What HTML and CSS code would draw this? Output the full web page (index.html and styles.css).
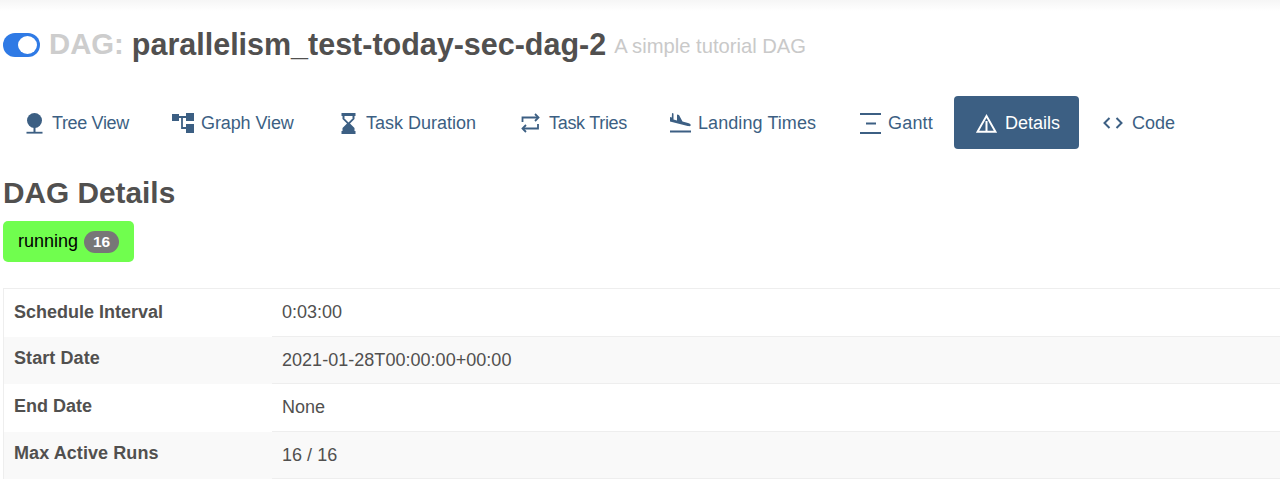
FILE: index.html
```html
<!DOCTYPE html>
<html lang="en">
<head>
<meta charset="utf-8">
<title>DAG Details</title>
<link rel="stylesheet" href="styles.css">
</head>
<body>
<div class="topshade"></div>
<main class="page">
  <h1 class="title">
    <span class="switch"><span class="knob"></span></span>
    <span class="dag-label">DAG:</span>
    <span class="dag-name">parallelism_test-today-sec-dag-2</span>
    <small class="dag-desc">A simple tutorial DAG</small>
  </h1>
  <nav class="tabs">
    <a class="tab tab-tree"><svg class="ico" width="17" height="21" viewBox="0 0 17 21"><circle cx="8.500" cy="7.500" r="7.500"/><rect x="7.500" y="12" width="2" height="7"/><rect x="0.500" y="18.800" width="16" height="1.800"/></svg>Tree View</a>
    <a class="tab tab-graph"><svg class="ico" width="22" height="20" viewBox="0 0 22 20"><rect x="0" y="1" width="7" height="7"/><rect x="14" y="0" width="8" height="8"/><rect x="14" y="11" width="8" height="9"/><path d="M7 4h7M10 4v11h4" fill="none" stroke="currentColor" stroke-width="1.800"/></svg>Graph View</a>
    <a class="tab tab-dur"><svg class="ico" width="15" height="21" viewBox="0 0 15 21"><path d="M0.500 0h14v3h-1v3L9 10.500l4.500 4.500v3h1v3H.5v-3h1v-3L6 10.500 1.500 6V3h-1z"/><path d="M3.500 3h8v2.500l-4 4-4-4z" fill="#fff"/></svg>Task Duration</a>
    <a class="tab tab-tries"><svg class="ico ico-line" width="19" height="20" viewBox="0 0 19 20" stroke="currentColor" stroke-width="1.800"><path d="M1.500 9V4.500h15"/><path d="M14 1l3.500 3.500L14 8" /><path d="M17 11v4.500H2.500"/><path d="M5 12l-3.500 3.500L5 19"/></svg>Task Tries</a>
    <a class="tab tab-land"><svg class="ico" width="21" height="20" viewBox="0 0 21 20"><path d="M2 0l1.500.4 0 6.100 3.500 1V1.500l2 .5 3.500 6.500 5.500 1.500c2 .6 3 1.500 2.700 2.500-.3.700-1.500.8-3 .5L0 8.500V4l1.800.5z"/><rect x="0" y="17.500" width="21" height="2"/></svg>Landing Times</a>
    <a class="tab tab-gantt"><svg class="ico" width="21" height="21" viewBox="0 0 21 21"><rect x="0" y="0" width="21" height="2"/><rect x="6" y="9.500" width="10" height="2"/><rect x="0" y="19" width="21" height="2"/></svg>Gantt</a>
    <a class="tab tab-details active"><svg class="ico" width="21" height="19" viewBox="0 0 21 19"><path d="M10.500 2L1.500 17.800h18z" fill="none" stroke="currentColor" stroke-width="1.900"/><rect x="9.500" y="7" width="2" height="10"/></svg>Details</a>
    <a class="tab tab-code"><svg class="ico ico-line" width="20" height="12" viewBox="0 0 20 12" stroke="currentColor" stroke-width="2"><path d="M6.500 1L1.500 6l5 5"/><path d="M13.500 1l5 5-5 5"/></svg>Code</a>
  </nav>
  <h2 class="section">DAG Details</h2>
  <div class="status"><span>running</span><span class="count">16</span></div>
  <div class="table">
    <div class="row"><div class="label">Schedule Interval</div><div class="value">0:03:00</div></div>
    <div class="row striped up"><div class="label">Start Date</div><div class="value">2021-01-28T00:00:00+00:00</div></div>
    <div class="row up"><div class="label">End Date</div><div class="value">None</div></div>
    <div class="row striped up"><div class="label">Max Active Runs</div><div class="value">16 / 16</div></div>
  </div>
</main>
</body>
</html>
```
FILE: styles.css
```css
* { box-sizing: border-box; }
html, body { margin: 0; padding: 0; height: 487px; overflow: hidden; background: #fff; }
body { font-family: "Liberation Sans", Arial, sans-serif; color: #51504f; position: relative; }
.topshade { position: absolute; left: 0; right: 0; top: 0; height: 11px; background: linear-gradient(#f6f6f6, #fff); }
.page { padding: 26px 0 0 3px; }
.title { margin: 0; height: 36px; display: flex; align-items: center; font-size: 30.500px; font-weight: 700; line-height: 34px; white-space: nowrap; }
.switch { width: 37px; height: 24px; border-radius: 12px; background: #2f7ae5; display: flex; align-items: center; justify-content: flex-end; padding-right: 3px; margin-right: 9px; margin-top: 1px; }
.knob { width: 19px; height: 18px; border-radius: 50%; background: #fff; }
.dag-label { color: #cdcdcd; font-size: 29.300px; margin-right: 8px; margin-bottom: 1px; }
.dag-name { margin-bottom: 1px; letter-spacing: -0.010px; }
.dag-desc { font-size: 20.200px; font-weight: 400; color: #c9c9c9; margin-left: 8px; margin-top: 3px; }
.tabs { display: flex; margin-top: 34px; height: 53px; font-size: 18px; color: #3c5f83; }
.tab { display: flex; align-items: center; height: 53px; border-radius: 4px; white-space: nowrap; padding-top: 1px; }
.ico { fill: currentColor; flex: none; }
.ico-line { fill: none; }
.tab-tree { width: 148px; padding-left: 23px; letter-spacing: -0.350px; }
.tab-tree .ico { margin-right: 9px; }
.tab-graph { width: 168px; padding-left: 21px; letter-spacing: -0.100px; }
.tab-graph .ico { margin-right: 7px; }
.tab-dur { width: 180px; padding-left: 22px; }
.tab-dur .ico { margin-right: 10px; }
.tab-tries { width: 150px; padding-left: 22px; letter-spacing: -0.300px; }
.tab-tries .ico { margin-right: 9px; }
.tab-land { width: 189px; padding-left: 21px; letter-spacing: 0.080px; }
.tab-land .ico { margin-right: 7px; }
.tab-gantt { width: 116px; padding-left: 22px; letter-spacing: 0.200px; }
.tab-gantt .ico { margin-right: 7px; }
.tab-details { width: 125px; padding-left: 22px; }
.tab-details .ico { margin-right: 8px; }
.tab-code { padding-left: 24px; }
.tab-code .ico { margin-right: 9px; }
.active { background: #3c5f83; color: #fff; }
.section { margin: 27px 0 0; font-size: 29.800px; line-height: 34px; font-weight: 700; }
.status { margin-top: 11px; width: 131px; height: 41px; background: #70fe4e; border-radius: 5px; color: #000; font-size: 18px; display: flex; align-items: center; padding-left: 15px; }
.count { margin-left: 6px; width: 35px; height: 22px; border-radius: 11px; background: #777; color: #fff; font-size: 15.500px; font-weight: 700; text-align: center; line-height: 22px; }
.table { margin-top: 26px; border-top: 1px solid #eee; border-left: 1px solid #eee; }
.row { display: flex; height: 47.500px; font-size: 18px; }
.striped { background: #f9f9f9; }
.label { width: 268px; padding-left: 10px; font-weight: 700; display: flex; align-items: center; }
.value { flex: 1; padding-left: 10px; border-bottom: 1px solid #eee; display: flex; align-items: center; }
.up .label { padding-bottom: 3px; }
.striped .value { padding-top: 2px; letter-spacing: 0.030px; }
.striped .label { letter-spacing: 0.080px; }
```
